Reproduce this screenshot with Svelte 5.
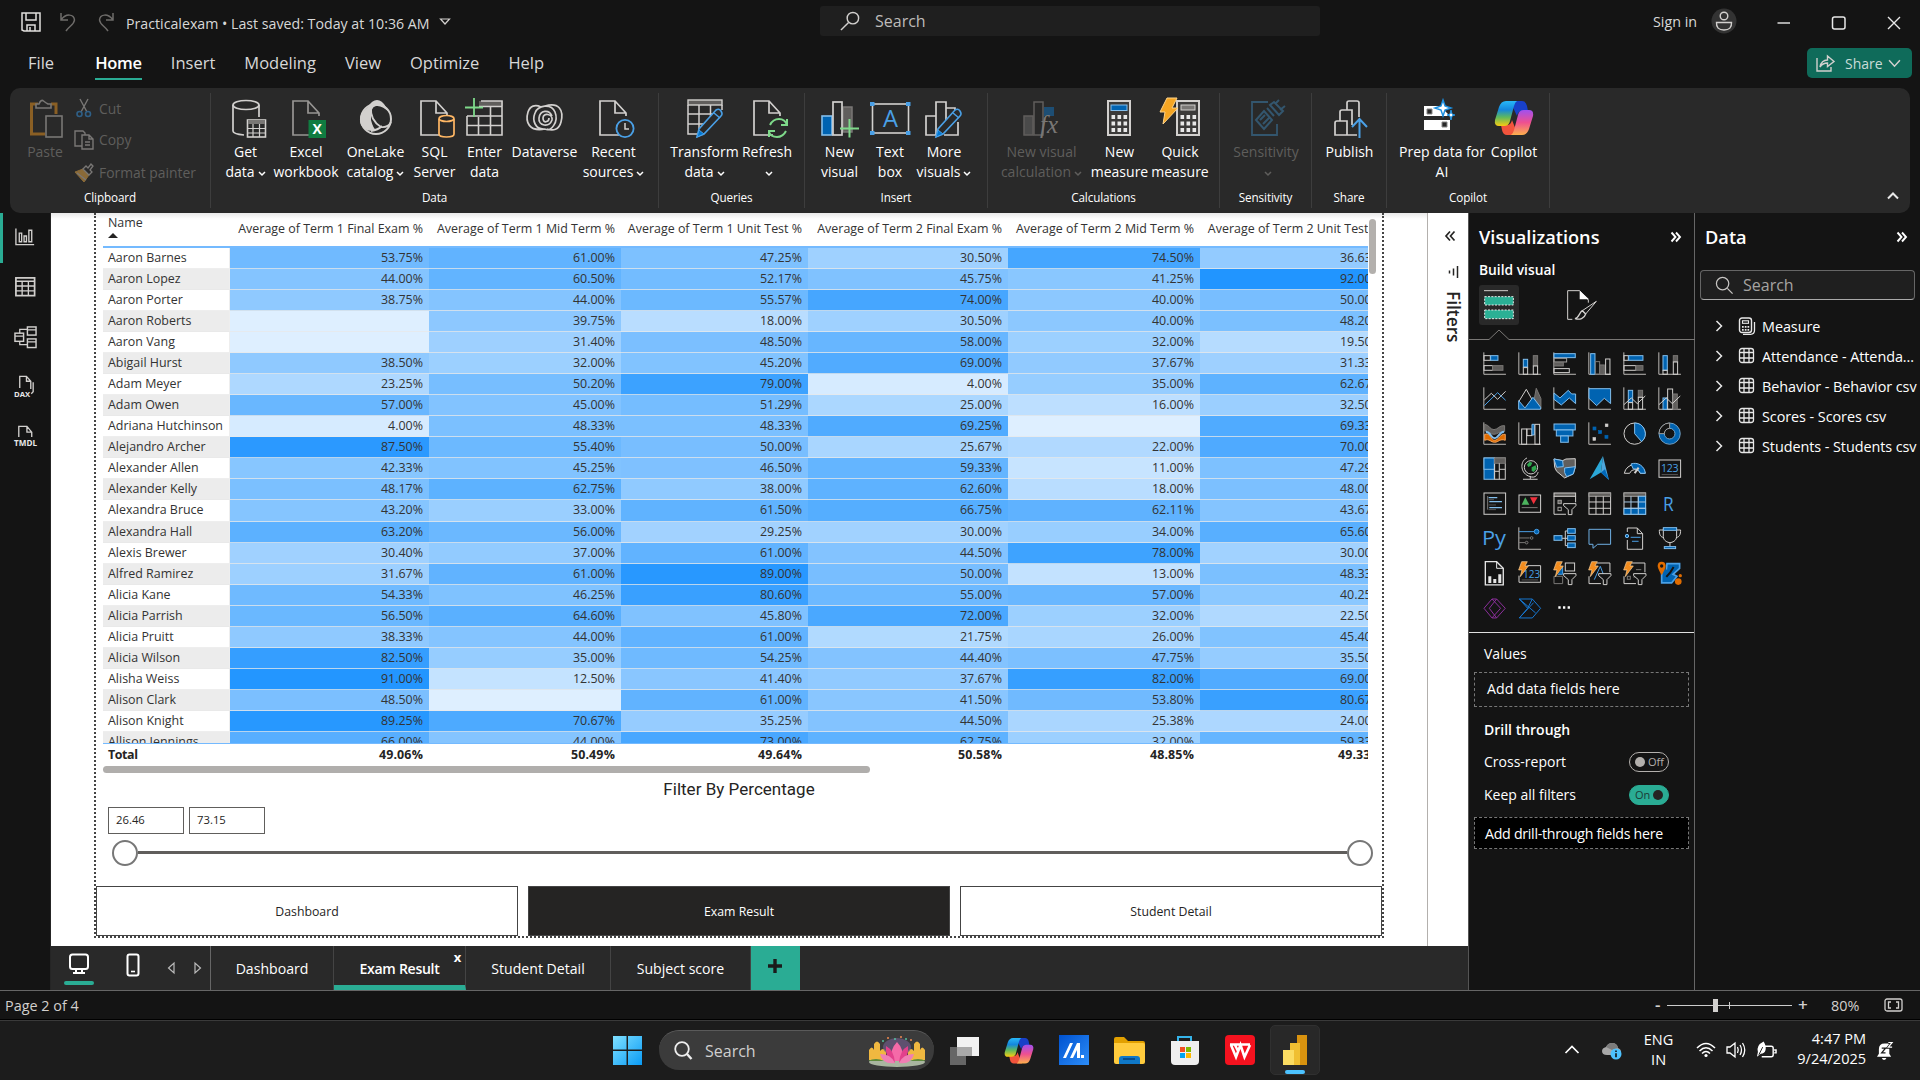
<script>
  // ---------- icon drawings ----------
  const L = '#d2d0ce', G = '#797775', D = '#605e5c', B = '#0063b1', LB = '#83beec', SB = '#4aa0e6';
  const r = (x, y, w, h, fill = 'none', stroke = L, sw = 3) =>
    `<rect x="${x}" y="${y}" width="${w}" height="${h}" fill="${fill}" stroke="${stroke}" stroke-width="${sw}"/>`;
  const p = (d, stroke = L, fill = 'none', sw = 3) =>
    `<path d="${d}" fill="${fill}" stroke="${stroke}" stroke-width="${sw}"/>`;
  const c = (cx, cy, rad, fill = 'none', stroke = L, sw = 3) =>
    `<circle cx="${cx}" cy="${cy}" r="${rad}" fill="${fill}" stroke="${stroke}" stroke-width="${sw}"/>`;
  const axis = p('M1.5 0V66H68', '#bebbb8');
  const bolt = '<path d="M10-2h17l-7 13h10L6 43l5-20H1z" fill="#f28c1e" stroke="#ffd7a0" stroke-width="2"/>';
  const funnel = '<path d="M31 34h37v6L56 52v15H45V52L31 40z" fill="#141414" stroke="#d2d0ce" stroke-width="3"/>';

  const visuals = [
    axis + r(2, 10, 19, 14) + r(22, 10, 22, 14, B, LB) + r(2, 40, 26, 14) + r(28, 40, 31, 14, D, G),
    axis + r(15, 21, 13, 23, B, LB) + r(15, 46, 13, 20) + r(45, 10, 13, 30, D, G) + r(45, 41, 13, 25),
    axis + r(2, 4, 64, 12, B, LB) + r(2, 18, 38, 11, 'none', '#a19f9d') + r(2, 30, 28, 11, D, G) + r(2, 49, 46, 12, 'none'),
    axis + r(7, 4, 13, 62, B, LB) + r(21, 28, 13, 38, 'none', G) + r(34, 38, 14, 28, D, G) + r(52, 20, 13, 46),
    axis + r(2, 10, 13, 14) + r(16, 10, 43, 14, B, LB) + r(2, 40, 36, 14) + r(38, 40, 21, 14, D, G),
    axis + r(14, 10, 13, 44, B, LB) + r(14, 54, 13, 12) + r(45, 10, 13, 18, D, G) + r(45, 29, 13, 37),

    axis + p('M3 55L43 16L67 39', SB) + p('M3 38L24 18L43 36L67 12'),
    p('M48 34L54 3L68 34V64Z', G, D) + p('M2 42L24 6L42 38') + p('M1 40L20 62L44 30L67 60V66H1Z', LB, B),
    axis + p('M2 17L20 32L45 9L55 20H67V49L48 32L24 53L2 36Z', LB, B),
    axis + p('M2 4H67V49L48 33L25 55L2 33Z', LB, B),
    axis + r(15, 9, 13, 36, B, LB) + r(15, 46, 13, 20) + r(45, 9, 13, 20, D, G) + r(45, 30, 13, 36) + p('M2 52L24 32L42 49L66 26'),
    axis + r(14, 32, 13, 34, B, LB) + r(28, 5, 15, 61) + r(44, 20, 13, 46, D, G) + p('M2 52L24 32L42 49L66 26'),

    axis + p('M4 6C18 8 20 22 32 22S48 8 64 10V28C48 26 44 36 32 36S18 26 4 26Z', G, D) + p('M4 36C22 30 22 54 34 54S50 34 66 36V54C50 48 46 60 34 60S18 48 4 54Z', '#f2a25a', '#e06c00') + p('M8 28C24 30 22 48 34 48S48 28 62 28', LB, 'none', 6),
    axis + r(10, 20, 15, 46) + r(26, 20, 15, 20) + p('M41 6H48V38H41Z', LB, B) + r(50, 6, 14, 60),
    r(2, 5, 64, 18, B, LB) + r(9, 23, 50, 18, B, LB) + r(22, 41, 23, 19, B, LB),
    axis + r(14, 14, 9, 9, B, B, 2) + r(31, 25, 9, 9, B, B, 2) + r(50, 39, 9, 9, B, B, 2) + r(51, 5, 8, 8, L, L, 2) + r(14, 46, 8, 8, L, L, 2),
    c(34, 34, 32) + p('M34 2A32 32 0 0 1 55 58L34 34Z', LB, B),
    c(34, 34, 24, 'none', B, 15) + c(34, 34, 32, 'none', LB, 2.5) + c(34, 34, 16, 'none', LB, 2.5) + p('M34 2A32 32 0 0 0 2 34H18A16 16 0 0 1 34 18Z', '#a19f9d', '#141414'),

    r(2, 2, 31, 64, B, LB) + r(2, 2, 31, 34, B, LB) + r(34, 2, 32, 64) + r(34, 2, 32, 16, D, G) + p('M48 18V66M34 42H48M48 36H66'),
    c(38, 30, 20, 'none') + '<path d="M26 22l8-9 8 3-4 9-8 4zM40 30l12-6 3 10-9 10-6-4z" fill="#2fa84f"/>' + p('M26 2C6 10 4 44 30 56S58 46 60 44M36 56V65M14 66H58'),
    p('M2 5L28 10L38 5L66 4V30L60 50L34 62L10 42L4 30Z', L, D) + p('M2 5L28 10L30 28L10 30ZM34 32L66 28L60 50L40 58L34 46Z', LB, B),
    '<path d="M44-4L4 66L38 46Z" fill="#2ba8d8"/><path d="M44-4L62 68L38 46Z" fill="#4ea6dc"/><path d="M38 46L62 68L50 36Z" fill="#0067b8"/>',
    p('M3 48A32 32 0 0 1 66 48H51A17 17 0 0 0 19 48Z', L, '#141414') + p('M23 20A32 32 0 0 1 66 48H51A17 17 0 0 0 30 35Z', LB, B) + p('M34 48L46 31', L, 'none', 6),
    r(2, 8, 65, 52) + `<text x="34" y="45" text-anchor="middle" font-size="32" letter-spacing="-1" font-family="Open Sans, sans-serif" fill="${SB}">123</text>` + p('M10 52H59', G, 'none', 2),

    r(2, 2, 65, 64) + p('M13 11V52', G) + p('M16 16H42M18 28H56M18 46H56', LB, 'none', 4) + p('M16 22H32M16 38H38M16 52H38', G, 'none', 2),
    r(2, 8, 65, 52) + '<path d="M10 37L21 15L33 37Z" fill="#4cb35e"/><path d="M35 15H58L46 36Z" fill="#f0303c"/>' + p('M10 46H58', G),
    r(2, 2, 65, 10, D) + p('M2 12V66H38M67 12V30') + r(14, 24, 10, 10, D, '#a19f9d') + r(14, 45, 10, 10, 'none', '#a19f9d') + funnel,
    r(2, 2, 65, 64) + r(2, 2, 65, 10, D, '#a19f9d') + p('M23 12V66M45 12V66M2 29H67M2 48H67'),
    r(2, 2, 65, 64) + r(2, 2, 65, 10, D, '#a19f9d') + r(45, 12, 22, 54, B, LB) + r(2, 48, 65, 18, B, LB) + p('M23 12V66M45 12V66M2 29H67M2 48H67', '#a8c8e4'),
    `<text x="14" y="56" font-size="58" textLength="32" lengthAdjust="spacingAndGlyphs" font-family="Open Sans, sans-serif" fill="${SB}">R</text>`,

    `<text x="-4" y="52" font-size="60" textLength="72" lengthAdjust="spacingAndGlyphs" font-family="Open Sans, sans-serif" fill="${SB}">Py</text>`,
    axis + p('M2 13H48', SB) + c(55, 13, 7, B, SB) + p('M2 32H34M2 46H20', G) + c(40, 32, 4, 'none', G) + c(25, 46, 4, 'none', G),
    p('M26 33H36M36 11V55M36 11H44M36 33H44M36 55H44') + r(2, 25, 24, 14, B, LB) + r(43, 4, 23, 14, B, LB) + r(43, 25, 23, 14, B, LB) + r(43, 47, 23, 14, B, LB),
    p('M2 6H67V51H28L14 63V51H2Z', '#6fb0e4'),
    p('M12 14V2H42L58 19V66H12V38M42 2V19H58') + c(11, 26, 5, B, LB) + p('M22 30H52', SB) + p('M26 42H46', SB),
    p('M15 4H55V28C55 40 42 46 35 46S15 40 15 28Z') + p('M15 8H3C3 22 6 29 17 31M55 8H67C67 22 64 29 53 31M35 46V58') + r(15, 1, 40, 8, B, LB) + r(18, 58, 34, 6, B, LB),

    p('M6-2H40L60 18V68H6Z', '#e6e6e6', 'none', 4) + p('M40-2V18H60', '#e6e6e6') + '<path d="M15 42h9v20h-9zM30 50h9v12h-9zM45 36h9v26h-9z" fill="#e6e6e6"/>',
    p('M28 10H67V60H2V40') + `<text x="40" y="47" text-anchor="middle" font-size="30" font-family="Open Sans, sans-serif" fill="${SB}">123</text>` + p('M10 53H59', G, 'none', 2) + bolt,
    r(36, 2, 28, 24, 'none', L) + p('M2 42H28V64H2Z', G) + p('M28 14V36H14', SB, B) + bolt + funnel,
    p('M26 2H65V30M2 42V64H38') + p('M18 52L36 12L46 38', SB) + bolt + funnel,
    p('M26 2H65V30M2 42V64H38') + p('M38 22H54M30 44H36', G) + r(12, 42, 9, 9, 'none', G) + bolt + funnel,
    p('M10 18V62H40L56 42L44 36L64 18V4H26L24 22', '#4aa0e6', '#0063b1', 5) + p('M24 44L36 30L46 14', '#141414', 'none', 6) + '<path d="M10-2c8 0 12 5 12 12 0 9-12 28-12 28S-2 19-2 10C-2 3 2-2 10-2z" fill="#e06c00"/><circle cx="10" cy="11" r="5" fill="#141414"/><circle cx="60" cy="58" r="10" fill="#e06c00"/><circle cx="66" cy="40" r="5" fill="#e06c00"/>',

    p('M2 33L26 5H40L66 33L40 62H26ZM26 5L52 33L26 62M40 5L18 33L40 62', '#8b2f9b', 'none', 3),
    p('M3 5H42L67 33L42 62H3L28 33ZM3 5L52 47M3 62L46 16M42 5L28 33', '#1777d1', 'none', 3),
    '<path d="M15 27h7v7h-7zM29 27h7v7h-7zM43 27h7v7h-7z" fill="#fff"/>',
  ];

  const page = (x) => p(`M${x + 26} 18V15L${x + 15} 3H${x}V37H${x + 19}M${x + 15} 3V15H${x + 26}`, L, 'none', 1.7);
  const bars = p('M2 37V18H12V37ZM12 37V4H21V37ZM21 10H31V20', L, 'none', 1.6);
  const pencil = '<path d="M12 39l2-8L31 12q3-2 5 1t0 5L19 36z" fill="#292929" stroke="#4aa0e6" stroke-width="1.6"/><path d="M12 39l2-7 5 4z" fill="#0078d4" stroke="#4aa0e6"/><path d="M29 15l6 5" stroke="#4aa0e6" stroke-width="1.5"/>';
  const calc = (x) => r(x, 3, 22, 34, '#3b3a39', L, 2) + Array.from({ length: 9 }, (_, i) => `<rect x="${x + 3.5 + (i % 3) * 6}" y="${17 + Math.floor(i / 3) * 6.5}" width="3.6" height="4" fill="#e8e8e8"/>`).join('');
  const copilot = `<defs><linearGradient id="ca" x1="0" y1="0" x2="0" y2="1"><stop offset="0" stop-color="#28b8f8"/><stop offset=".35" stop-color="#1487dd"/><stop offset=".65" stop-color="#5fb95c"/><stop offset="1" stop-color="#f8cc12"/></linearGradient><linearGradient id="cb" x1="0" y1="0" x2="0" y2="1"><stop offset="0" stop-color="#a050f0"/><stop offset=".5" stop-color="#ee5090"/><stop offset="1" stop-color="#fdb04c"/></linearGradient></defs>
    <path d="M16 3h12q4 0 5 5l1 5h-6q-4 0-5 5z" fill="#1840c8"/><path d="M24 37H13q-4 0-5-5l-1-5h6q4 0 5-5z" fill="#f2543c"/>
    <path d="M12 3h11q-2 1-3 5l-4 15q-1 5-6 5H5q-5 0-4-6l4-13q2-6 7-6z" fill="url(#ca)"/><path d="M28 37H17q2-1 3-5l4-15q1-5 6-5h5q5 0 4 6l-4 13q-2 6-7 6z" fill="url(#cb)"/>`;

  const ribbonIcons = {
    getData: p('M7 7V33Q7 36 18 37M33 7V19', L, 'none', 1.7) + `<ellipse cx="20" cy="7" rx="13" ry="4.5" fill="none" stroke="${L}" stroke-width="1.7"/>` + r(21.5, 22, 18, 17, '#292929', L, 1.6) + `<path d="M22 22h17v4H22z" fill="${G}"/>` + p('M27 26V39M33.5 26V39M22 30.5H39M22 35H39', L, 'none', 1.2),
    excel: page(7).replaceAll(L, '#979593') + '<rect x="22.500" y="22" width="17.500" height="18" fill="#107c41"/><text x="31.200" y="36" text-anchor="middle" font-size="14" font-weight="700" font-family="Open Sans, sans-serif" fill="#fff">X</text>',
    onelake: c(20, 21, 15, 'none', L, 2) + '<path d="M12 9Q16 2 21 2T30 9L34 15Q26 7 20 8T15 22Q17 30 20 32Q10 35 5 27Q1 17 12 9Z" fill="#d2d0ce"/>' + p('M15 10Q14 22 25 29Q32 30 35 24M15 33Q22 32 26 28', L, 'none', 1.8),
    sql: page(6) + p('M24 21V36Q24 39 31.500 39T39 36V21', '#ffb764', '#292929', 1.7) + '<ellipse cx="31.500" cy="20.500" rx="7.500" ry="3" fill="#292929" stroke="#ffb764" stroke-width="1.700"/>',
    enter: `<path d="M14 3h24v5H14z" fill="${D}"/>` + p('M16 3H37V37H2V18M14 8.500H37M2 18H37M2 27.500H37M13.500 19V37M25.500 9V37', L, 'none', 1.6) + p('M0 9.500H18M9 0V19', '#7ed98a', 'none', 1.8),
    dataverse: p('M20 31C4 34 0 24 3 14C5 8 10 6 16 9M20 8C34 4 39 12 36 24C34 32 28 33 22 31M20 31C10 32 7 22 10 15C13 7 26 5 30 14C34 24 26 34 20 31M27 18C24 11 15 12 14 20S24 30 27 22C28 16 18 14 18 20S24 24 24 20', L, 'none', 1.7),
    recent: page(6) + c(31, 30.5, 8.6, '#292929', SB, 1.8) + p('M31 25V31H35', L, 'none', 1.5),
    transform: r(3, 2, 34, 5, D, L, 1.4) + p('M3 7V36H14M37 7V12M3 16H29M3 26H20M14 7V36M25.500 7V20', L, 'none', 1.5) + pencil,
    refresh: page(7) + '<path d="M23 27q3-6 9-6 6 0 8 6M39 33q-3 6-9 6-6 0-8-5M40 21v6h-6M22 39v-6h6" fill="none" stroke="#7ed98a" stroke-width="2"/>',
    newVisual: r(2, 18, 10, 19, B, LB, 1.6) + r(23, 9, 9, 25, D, G, 1.5) + r(13, 4, 9, 33, '#292929', L, 1.7) + p('M20 30.500H39M29.500 21V39.500', '#7ed98a', 'none', 2),
    textBox: r(2.5, 6, 36, 29, 'none', L, 1.6) + `<text x="20.500" y="29" text-anchor="middle" font-size="24" textLength="15" lengthAdjust="spacingAndGlyphs" font-family="Open Sans, sans-serif" fill="${SB}">A</text>` + [[0, 4], [36, 4], [0, 33], [36, 33]].map(([x, y]) => `<rect x="${x}" y="${y}" width="4.500" height="4" fill="${SB}"/>`).join(''),
    moreVisuals: p('M2 37V18H12V37ZM12 37V4H22V26M22 10H31V14M34 24V37H20', L, 'none', 1.7) + pencil,
    newCalc: r(2, 18, 9, 19, '#4a4a4a', D, 1.5) + r(12, 4, 9, 33, 'none', D, 1.5) + '<path d="M22 9h10v9H22z" fill="#1d4e74"/><text x="18" y="35" font-size="25" font-style="italic" font-family="Liberation Serif, serif" fill="#797775">fx</text>',
    newMeasure: calc(8) + r(11, 7, 16, 5.5, B, LB, 1),
    quickMeasure: calc(17) + r(21, 7, 14, 5, G, L, 1) + '<path d="M7 0h10l-5 10h6L3 26l2-12H0z" fill="#f5a623" stroke="#ffd48a" stroke-width="1"/>',
    sensitivity: p('M22 4H6V37H31V26', '#33566e', 'none', 1.8) + '<path d="M10 22l8-9 8 9-8 9zM21 10l7 8M24 7l9 10 4-4-9-9zM14 22l5-5M17 26l6-6M29 6l4-4M34 12l5-4" fill="none" stroke="#33566e" stroke-width="2"/>',
    publish: '<path d="M5 37V25q0-2 2-2h10v14zM10 23V14q0-2 2-2h10v15M17 12V5q0-2 2-2h8q2 0 2 2v14M5 37h22" fill="none" stroke="#d2d0ce" stroke-width="1.700"/>' + p('M29.500 40V21M22 29L29.500 21L37 29', SB, 'none', 2),
    prep: '<path d="M2 8h16l4 4 5 5v1H2zM2 22h26v10H2z" fill="#fff"/><path d="M5 11h5v5H5zM20 24h5v5h-5z" fill="#292929" stroke="#888"/><path d="M21 2l2 6 6 2-6 2-2 6-2-6-6-2 6-2z" fill="#fff" stroke="#1b8fe0" stroke-width="1.500"/><path d="M29 12l1 4 3 1-3 1-1 4-1-4-3-1 3-1z" fill="#fff" stroke="#1b8fe0"/>',
    copilot,
  };

  const groups = [
    { label: 'Data', w: 448, pad: 9, items: [
      { i: 'getData', t: ['Get', 'data'], w: 51, v: 1 }, { i: 'excel', t: ['Excel', 'workbook'], w: 70 }, { i: 'onelake', t: ['OneLake', 'catalog'], w: 69, v: 1 },
      { i: 'sql', t: ['SQL', 'Server'], w: 49 }, { i: 'enter', t: ['Enter', 'data'], w: 51 }, { i: 'dataverse', t: ['Dataverse', ''], w: 69 }, { i: 'recent', t: ['Recent', 'sources'], w: 69, v: 1 }] },
    { label: 'Queries', w: 146, pad: 12, items: [{ i: 'transform', t: ['Transform', 'data'], w: 67, v: 1 }, { i: 'refresh', t: ['Refresh', ''], w: 58, v: 1 }] },
    { label: 'Insert', w: 183, pad: 10, items: [{ i: 'newVisual', t: ['New', 'visual'], w: 49 }, { i: 'textBox', t: ['Text', 'box'], w: 52 }, { i: 'moreVisuals', t: ['More', 'visuals'], w: 56, v: 1 }] },
    { label: 'Calculations', w: 232, pad: 6, items: [{ i: 'newCalc', t: ['New visual', 'calculation'], w: 95, v: 1, off: 1 }, { i: 'newMeasure', t: ['New', 'measure'], w: 61 }, { i: 'quickMeasure', t: ['Quick', 'measure'], w: 60 }] },
    { label: 'Sensitivity', w: 92, pad: 0, items: [{ i: 'sensitivity', t: ['Sensitivity', ''], w: 92, v: 1, off: 1 }] },
    { label: 'Share', w: 75, pad: 0, items: [{ i: 'publish', t: ['Publish', ''], w: 75 }] },
    { label: 'Copilot', w: 163, pad: 11, items: [{ i: 'prep', t: ['Prep data for', 'AI'], w: 88 }, { i: 'copilot', t: ['Copilot', ''], w: 56 }] },
  ];

  // ---------- report data ----------
  const columns = ['Term 1 Final Exam', 'Term 1 Mid Term', 'Term 1 Unit Test', 'Term 2 Final Exam', 'Term 2 Mid Term', 'Term 2 Unit Test'];
  const students = [
    ['Aaron Barnes', 53.75, 61, 47.25, 30.5, 74.5, 36.63], ['Aaron Lopez', 44, 60.5, 52.17, 45.75, 41.25, 92],
    ['Aaron Porter', 38.75, 44, 55.57, 74, 40, 50], ['Aaron Roberts', null, 39.75, 18, 30.5, 40, 48.2],
    ['Aaron Vang', null, 31.4, 48.5, 58, 32, 19.5], ['Abigail Hurst', 38.5, 32, 45.2, 69, 37.67, 31.33],
    ['Adam Meyer', 23.25, 50.2, 79, 4, 35, 62.67], ['Adam Owen', 57, 45, 51.29, 25, 16, 32.5],
    ['Adriana Hutchinson', 4, 48.33, 48.33, 69.25, null, 69.33], ['Alejandro Archer', 87.5, 55.4, 50, 25.67, 22, 70],
    ['Alexander Allen', 42.33, 45.25, 46.5, 59.33, 11, 47.29], ['Alexander Kelly', 48.17, 62.75, 38, 62.6, 18, 48],
    ['Alexandra Bruce', 43.2, 33, 61.5, 66.75, 62.11, 43.67], ['Alexandra Hall', 63.2, 56, 29.25, 30, 34, 65.6],
    ['Alexis Brewer', 30.4, 37, 61, 44.5, 78, 30], ['Alfred Ramirez', 31.67, 61, 89, 50, 13, 48.33],
    ['Alicia Kane', 54.33, 46.25, 80.6, 55, 57, 40.25], ['Alicia Parrish', 56.5, 64.6, 45.8, 72, 32, 22.5],
    ['Alicia Pruitt', 38.33, 44, 61, 21.75, 26, 45.4], ['Alicia Wilson', 82.5, 35, 54.25, 44.4, 47.75, 35.5],
    ['Alisha Weiss', 91, 12.5, 41.4, 37.67, 82, 69], ['Alison Clark', 48.5, null, 61, 41.5, 53.8, 80.67],
    ['Alison Knight', 89.25, 70.67, 35.25, 44.5, 25.38, 24], ['Allison Jennings', 66, 44, 73, 62.75, 32, 59.33],
  ];
  const totals = [49.06, 50.49, 49.64, 50.58, 48.85, 49.33];
  const pct = (v) => (v == null ? '' : v.toFixed(2) + '%');
  // Background scale runs from pale blue (0) to the theme blue (100).
  const shade = (v) => {
    const k = (v ?? 0) / 100;
    return `rgb(${Math.round(222 - 205 * k)},${Math.round(239 - 98 * k)},255)`;
  };

  const pages = [{ n: 'Dashboard', w: 123 }, { n: 'Exam Result', w: 132 }, { n: 'Student Detail', w: 145 }, { n: 'Subject score', w: 140 }];
  const menu = ['File', 'Home', 'Insert', 'Modeling', 'View', 'Optimize', 'Help'];
  const fields = ['Measure', 'Attendance - Attenda...', 'Behavior - Behavior csv', 'Scores - Scores csv', 'Students - Students csv'];
  const navs = ['Dashboard', 'Exam Result', 'Student Detail'];

  const rail = [
    p('M2 3V20H21M5.500 8V17H8V8ZM10.500 11V17H13V11ZM15.500 5V17H18.500V5Z', L, 'none', 1.4),
    r(2, 2.5, 19.5, 18.5, 'none', L, 1.8) + p('M2 6H21.500M2 11H21.500M2 16H21.500M8.500 6V21M15 6V21', L, 'none', 1.4),
    r(1, 8, 9, 8.5, 'none', L, 1.5) + r(14, 1.5, 9, 8.5, 'none', L, 1.5) + r(14, 14, 9, 9, 'none', L, 1.5) + p('M1 11H10M14 4.500H23M14 17H23M6 8V4H14M6 16.500V20H14', L, 'none', 1.3),
    p('M6 14V2H13L17.500 7V15M13 2V7H17.500M20 8V18L18 20', L, 'none', 1.4) + '<text x="0" y="23" font-size="8" font-weight="700" font-family="Open Sans, sans-serif" fill="#e8e8e8">DAX</text>',
    p('M5 13V2H13.500L18.500 8V13M13.500 2V8H18.500', L, 'none', 1.4) + '<text x="0" y="22.500" font-size="8.500" textLength="24" font-weight="700" font-family="Open Sans, sans-serif" fill="#e8e8e8">TMDL</text>',
  ];

  const grad = (id, a, b) => `<linearGradient id="${id}" x1="0" y1="0" x2="1" y2="1"><stop offset="0" stop-color="${a}"/><stop offset="1" stop-color="${b}"/></linearGradient>`;
  const apps = [
    { w: 30, html: '<path d="M1 12h16v18H1z" fill="#666"/><path d="M8 2h22v19H8z" fill="#f2f2f2"/><path d="M8 12h15v9H8z" fill="#a9a9a9"/>' },
    { w: 30, html: `<g transform="scale(.75) translate(0 1)">${copilot}</g>` },
    { w: 30, html: `<defs>${grad('ma', '#0052d0', '#2c8df8')}</defs><path d="M0 0h30v30H0z" fill="url(#ma)"/><path d="M4 23l7-15h3L7 23zM11 23l7-15h3v15h-3v-8l-4 8zM22 20h3v3h-3z" fill="#fff"/>` },
    { w: 31, html: '<path d="M0 4q0-2 2-2h8l4 4h15q2 0 2 2v6H0z" fill="#e2a000"/><path d="M0 8h29q2 0 2 2v17q0 2-2 2H2q-2 0-2-2z" fill="#ffcb3d"/><path d="M5 29v-5q0-3 3-3h15q3 0 3 3v5z" fill="#0f78c8"/><path d="M9 24h12" stroke="#063e78" stroke-width="1.500"/>' },
    { w: 30, html: '<path d="M8 7V2h13v5" fill="none" stroke="#35b4ea" stroke-width="2"/><path d="M1 6h28v20q0 4-4 4H5q-4 0-4-4z" fill="#efefef"/><path d="M10 12h5v5h-5z" fill="#f25022"/><path d="M16 12h5v5h-5z" fill="#7fba00"/><path d="M10 18h5v5h-5z" fill="#00a4ef"/><path d="M16 18h5v5h-5z" fill="#ffb900"/>' },
    { w: 30, html: '<rect width="30" height="30" rx="4" fill="#f5121f"/><path d="M5 9.500h20M6 10l5 12 4.500-12 4 12L25 10M10 10l3 6" fill="none" stroke="#fff" stroke-width="2.600"/>' },
  ];
</script>

<div class="app">
  <header class="title">
    <svg class="i20" viewBox="0 0 20 20">{@html p('M1 2V18L3 19H19V1H1ZM5 1V8H15V1M6 19V13H14V19M9 19V15', '#e1dfdd', 'none', 1.5)}</svg>
    <svg class="i20 undo" viewBox="0 0 20 20">{@html p('M3 1V8H10M3 8C8 1 16 2 16.500 8C16 13 11 14 8 19', '#6e6c6a', 'none', 1.5)}</svg>
    <svg class="i20 redo" viewBox="0 0 20 20">{@html p('M17 1V8H10M17 8C12 1 4 2 3.500 8C4 13 9 14 12 19', '#6e6c6a', 'none', 1.5)}</svg>
    <span class="doc">Practicalexam • Last saved: Today at 10:36 AM</span>
    <svg class="tri" viewBox="0 0 12 8"><path d="M1.500 1h9L6 6z" fill="none" stroke="#d2d0ce" stroke-width="1.200" /></svg>
    <div class="topsearch">
      <svg class="i22" viewBox="0 0 22 22">{@html c(13.5, 7.5, 6, 'none', L, 1.5) + p('M9 12L1 20', L, 'none', 1.5)}</svg><span>Search</span>
    </div>
    <span class="signin">Sign in</span>
    <svg class="avatar" viewBox="0 0 26 26"><circle cx="13" cy="13" r="12.500" fill="#333" />{@html c(13, 8, 3.8, 'none', L, 1.4) + p('M5.500 14.500H20.500Q21 22 13 22T5.500 14.500Z', L, 'none', 1.4)}</svg>
    <div class="win">
      <svg viewBox="0 0 16 16">{@html p('M1.500 8H14', '#e8e8e8', 'none', 1.4)}</svg>
      <svg viewBox="0 0 16 16"><rect x="1.500" y="2" width="12.500" height="12" rx="2" fill="none" stroke="#e8e8e8" stroke-width="1.500" /></svg>
      <svg viewBox="0 0 16 16">{@html p('M2 2L14 14M14 2L2 14', '#e8e8e8', 'none', 1.4)}</svg>
    </div>
  </header>

  <nav class="menu">
    {#each menu as m}<span class:active={m === 'Home'}>{m}</span>{/each}
    <button class="share">
      <svg viewBox="0 0 20 20">{@html p('M2 5V18H16V14M5 14C6 9 9 7 12.500 7V3L19 8.500L12.500 13.500V10C9 10 7 11 5 14Z', L, 'none', 1.4)}</svg>Share
      <svg class="chev" viewBox="0 0 12 12">{@html p('M1 3L6 8.500L11 3', L, 'none', 1.4)}</svg>
    </button>
  </nav>

  <section class="ribbon">
    <div class="group clip">
      <div class="clipbody">
        <div class="paste">
          <svg viewBox="0 0 40 40">
            {@html p('M11 6H4.500V36H18M24 6H29V16', '#8a5f24', 'none', 3) + p('M9 10V6H12Q14 1 16.500 3T21 6H24V10Z', '#797775', '#292929', 1.6) + r(19, 18, 16, 21, '#292929', '#797775', 1.6)}
          </svg>
          <span>Paste</span>
        </div>
        <div class="clips">
          <div><svg viewBox="0 0 20 20">{@html p('M6 1L13 14M14 1L7 14', '#797775', 'none', 1.4) + c(5.5, 16, 2.5, 'none', '#2f5f86', 1.6) + c(14, 16, 2.5, 'none', '#2f5f86', 1.6)}</svg>Cut</div>
          <div><svg viewBox="0 0 20 20">{@html p('M8 16H1V1H9L11 3V5M8 5H15L19 9V19H8ZM15 5V9H19M11 12H16M11 15H16', '#797775', 'none', 1.4)}</svg>Copy</div>
          <div><svg viewBox="0 0 20 20">{@html p('M1 9L9 6L15 12L10 19Z', '#8a6a38', '#8a6a38', 1) + p('M9 6L12 3L14 5L17 1L19 3L16 7L18 9L15 12ZM3 10L12 17', '#797775', '#292929', 1.3)}</svg>Format painter</div>
        </div>
      </div>
      <p>Clipboard</p>
    </div>
    {#each groups as g}
      <div class="group" style="width:{g.w}px">
        <div class="items" style="padding-left:{g.pad}px">
          {#each g.items as it}
            <div class="item" class:off={it.off} style="width:{it.w}px">
              <svg class="ri" viewBox="0 0 40 40">{@html ribbonIcons[it.i]}</svg>
              <span>{it.t[0]}</span>
              <span>{it.t[1]}{#if it.v}<svg class="car" viewBox="0 0 8 6"><path d="M1 1l3 3 3-3" fill="none" stroke="currentColor" stroke-width="1.500" /></svg>{/if}</span>
            </div>
          {/each}
        </div>
        <p>{g.label}</p>
      </div>
    {/each}
    <svg class="collapse" viewBox="0 0 12 8">{@html p('M1 6.500L6 1.500L11 6.500', '#e8e8e8', 'none', 2)}</svg>
  </section>

  <main>
    <aside class="rail">
      {#each rail as icon, n}<div class:on={n === 0}><svg viewBox="0 0 24 24">{@html icon}</svg></div>{/each}
    </aside>

    <div class="center">
      <div class="work">
        <div class="canvas">
          <div class="frame">
            <div class="matrix">
              <div class="row head">
                <span>Name<i></i></span>
                {#each columns as col}<span>Average of {col} %</span>{/each}
              </div>
              <div class="rows">
                {#each students as s}
                  <div class="row">
                    <span>{s[0]}</span>
                    {#each s.slice(1) as v}<span style="background:{shade(v)}">{pct(v)}</span>{/each}
                  </div>
                {/each}
              </div>
              <div class="row total"><span>Total</span>{#each totals as t}<span>{pct(t)}</span>{/each}</div>
            </div>
            <div class="vbar"></div>
            <div class="hbar"></div>
            <h3>Filter By Percentage</h3>
            <div class="inputs"><span>26.46</span><span>73.15</span></div>
            <div class="slider"><b></b><hr /><b></b></div>
            <div class="navs">{#each navs as n}<span class:sel={n === 'Exam Result'}>{n}</span>{/each}</div>
          </div>
        </div>
        <div class="filters">
          <svg class="dbl" viewBox="0 0 12 12">{@html p('M6 1.500L2 6L6 10.500M10.500 1.500L6.500 6L10.500 10.500', '#252423', 'none', 1.7)}</svg>
          <svg class="fi" viewBox="0 0 12 12">{@html p('M10.500 0V12M6.500 2.500V9.500M2.500 4.500V7.500', '#252423', 'none', 1.5)}</svg>
          <span>Filters</span>
        </div>
      </div>
      <div class="pages">
        <div class="views">
          <div class="desk"><svg viewBox="0 0 22 22">{@html '<rect x="2" y="1.500" width="18" height="14.500" rx="2.500" fill="none" stroke="#fff" stroke-width="2"/>' + p('M8 16V19M14 16V19M5 20H17', '#fff', 'none', 2)}</svg><i></i></div>
          <svg class="phone" viewBox="0 0 14 24"><rect x="1.500" y="1.500" width="11" height="21" rx="2" fill="none" stroke="#fff" stroke-width="2" />{@html p('M5 18.500H9', '#fff', 'none', 1.6)}</svg>
          <svg class="arr" viewBox="0 0 8 12">{@html p('M7 1V11L1.500 6Z', '#bbb', 'none', 1.2)}</svg>
          <svg class="arr a2" viewBox="0 0 8 12">{@html p('M1 1V11L6.500 6Z', '#bbb', 'none', 1.2)}</svg>
        </div>
        {#each pages as pg, n}
          <div class="tab" class:cur={n === 1} style="width:{pg.w}px">{pg.n}{#if n === 1}<em>x</em>{/if}</div>
        {/each}
        <div class="add"><svg viewBox="0 0 14 14">{@html p('M7 0V14M0 7H14', '#1b1b1b', 'none', 3.4)}</svg></div>
      </div>
    </div>

    <section class="viz">
      <h2>Visualizations<svg class="dbl" viewBox="0 0 12 12">{@html p('M1.500 1.500L5.500 6L1.500 10.500M6 1.500L10 6L6 10.500', '#fff', 'none', 1.9)}</svg></h2>
      <h4>Build visual</h4>
      <div class="modes">
        <div class="mode"><svg viewBox="0 0 90 90">{@html p('M0 2H72', L) + r(2, 20, 86, 25, '#2bb095', '#e8e8e8').replace('/>', ' stroke-dasharray="6 4"/>') + r(2, 60, 86, 26, '#2bb095', '#e8e8e8').replace('/>', ' stroke-dasharray="6 4"/>')}</svg></div>
        <svg class="brush" viewBox="0 0 90 90">{@html p('M16 88H2V2H38L64 30V38', L) + '<path d="M38 2V28H66Z" fill="#fff"/>' + p('M88 34L56 72L46 62Z', L, '#141414') + p('M24 86C36 84 36 68 46 62L56 72C52 86 38 90 24 86Z', L, '#141414', 4)}</svg>
      </div>
      <svg class="notch" viewBox="0 0 226 12">{@html p('M0 10.500H20L30 1L40 10.500H226', '#797775', 'none', 1)}</svg>
      <div class="gallery">{#each visuals as v}<div><svg viewBox="-4 -4 80 80">{@html v}</svg></div>{/each}</div>
      <div class="wells">
        <p>Values</p>
        <div class="well">Add data fields here</div>
        <p class="b">Drill through</p>
        <p class="sw">Cross-report<span class="toggle"><i></i>Off</span></p>
        <p class="sw two">Keep all filters<span class="toggle ont">On<i></i></span></p>
        <div class="well dark">Add drill-through fields here</div>
      </div>
    </section>

    <section class="data">
      <h2>Data<svg class="dbl" viewBox="0 0 12 12">{@html p('M1.500 1.500L5.500 6L1.500 10.500M6 1.500L10 6L6 10.500', '#fff', 'none', 1.9)}</svg></h2>
      <div class="dsearch"><svg viewBox="0 0 20 20">{@html c(8, 8, 6.5, 'none', '#c8c6c4', 1.3) + p('M13 13L18.500 18.500', '#c8c6c4', 'none', 1.3)}</svg>Search</div>
      {#each fields as f, n}
        <div class="field">
          <svg class="fc" viewBox="0 0 8 12">{@html p('M1.500 1L6.500 6L1.500 11', '#e8e8e8', 'none', 1.5)}</svg>
          <svg class="ft" viewBox="0 0 18 18">
            {#if n === 0}
              {@html '<rect x="1.500" y="1" width="12" height="14.500" rx="2.500" fill="none" stroke="#e8e8e8" stroke-width="1.400"/><path d="M5 17.300h7.500q4 0 4-4V5" fill="none" stroke="#e8e8e8" stroke-width="1.300"/>' + r(4.5, 3.8, 6, 2.5, 'none', '#e8e8e8', 1.1) + '<path d="M4 9h1.700v1.700H4zM6.800 9h1.700v1.700H6.800zM9.500 9h1.700v1.700H9.500zM4 12h1.700v1.700H4zM6.800 12h1.700v1.700H6.800zM9.500 12h1.700v1.700H9.500z" fill="#e8e8e8"/>'}
            {:else}
              {@html '<rect x="1.500" y="1.500" width="14" height="14" rx="2.500" fill="none" stroke="#e8e8e8" stroke-width="1.300"/>' + p('M6 1.500V15.500M11 1.500V15.500M1.500 5.500H15.500M1.500 11H15.500', '#e8e8e8', 'none', 1.3)}
            {/if}
          </svg>
          {f}
        </div>
      {/each}
    </section>
  </main>

  <footer class="status">
    <span>Page 2 of 4</span>
    <div class="zoom">
      <b>-</b><div class="track"><i></i><u></u></div><b class="plus">+</b><span>80%</span>
      <svg viewBox="0 0 20 14"><rect x="1" y="1" width="17" height="12" rx="2" fill="none" stroke="#d2d0ce" stroke-width="1.300" />{@html p('M7 4H4.500V10H7M12 4H14.500V10H12', L, 'none', 1.3)}</svg>
    </div>
  </footer>

  <footer class="taskbar">
    <svg class="start" viewBox="0 0 30 30"><defs>{@html grad('wg', '#7fe0ff', '#0a9bf5')}</defs><path d="M0 0h14v14H0zM15.500 0H30v14H15.500zM0 15.500h14V30H0zM15.500 15.500H30V30H15.500z" fill="url(#wg)" /></svg>
    <div class="pill">
      <svg class="mag" viewBox="0 0 20 20">{@html c(9, 8, 6.8, 'none', '#eee', 1.8) + p('M14 13L18.500 18', '#eee', 'none', 2.4)}</svg>
      <span>Search</span>
      <svg class="lotus" viewBox="0 0 58 32">
        <ellipse cx="29" cy="27" rx="28" ry="5" fill="#a9b5a0" />
        <path d="M1 25V15q3-5 5 0V9q3-5 6 0v7q3-4 6 0v9zM57 25V15q-3-5-5 0V9q-3-5-6 0v7q-3-4-6 0v9z" fill="#f0b840" />
        <path d="M0 26q8-4 16 0h-16zM58 26q-8-4-16 0z" fill="#5d8a3c" />
        <ellipse cx="29" cy="12" rx="14" ry="9" fill="#6d5a86" opacity=".7" />
        <path d="M29 7q8 8 5 19h-10q-3-11 5-19z" fill="#f56aa8" />
        <path d="M18 11q8 4 9 17-10-3-9-17zM40 11q-8 4-9 17 10-3 9-17z" fill="#e2408c" />
        <path d="M12 19q11 0 15 9-12 2-15-9zM46 19q-11 0-15 9 12 2 15-9z" fill="#f07fb4" />
        <g fill="#f08a50"><circle cx="20" cy="3" r="1" /><circle cx="33" cy="2" r="1" /><circle cx="43" cy="5" r="1" /></g>
        <g fill="#55c0a0"><circle cx="15" cy="6" r="1" /><circle cx="27" cy="4" r="1" /><circle cx="38" cy="4" r="1" /></g>
      </svg>
    </div>
    <div class="apps">
      {#each apps as a}<svg style="width:{a.w}px" viewBox="0 0 {a.w} 30">{@html a.html}</svg>{/each}
    </div>
    <div class="pbi">
      <svg viewBox="0 0 24 30"><path d="M14 0h10v30H12V8h2z" fill="#d9930f" /><path d="M7 8h10v22H7z" fill="#f0bf32" /><path d="M0 15h11v15H0z" fill="#fbdc62" /></svg><i></i>
    </div>
    <div class="tray">
      <svg class="up" viewBox="0 0 16 10">{@html p('M1.500 8L8 1.500L14.500 8', '#fff', 'none', 1.7)}</svg>
      <svg class="cloud" viewBox="0 0 22 18"><path d="M6 13q-5 0-5-4 0-3 4-4 2-4 6-4 5 0 6 5 3 1 3 4 0 3-4 3z" fill="#a8a8a8" /><path d="M5 5q2-4 6-4 5 0 6 5l-6 2z" fill="#7c7c7c" /><circle cx="15" cy="12" r="5.500" fill="#4cc2ff" /><path d="M15 8.500v1.500M15 11.200v4" stroke="#111" stroke-width="1.600" /></svg>
      <div class="lang">ENG<br />IN</div>
      <svg class="wifi" viewBox="0 0 20 16">{@html p('M1 6Q10-3 19 6M3.500 9Q10 2.500 16.500 9M6 11.500Q10 7.500 14 11.500', '#fff', 'none', 1.5) + c(10, 13.5, 1.6, '#fff', 'none', 0)}</svg>
      <svg class="vol" viewBox="0 0 20 18">{@html p('M1 6H4L9 2V16L4 12H1ZM11.500 6Q13 9 11.500 12M14 4Q17 9 14 14M16.500 2Q21 9 16.500 16', '#fff', 'none', 1.3)}</svg>
      <svg class="bat" viewBox="0 0 22 18">{@html '<path d="M9 5h7q2 0 2 2v7q0 2-2 2H6M19 9h2v3h-2" fill="none" stroke="#fff" stroke-width="1.500"/><path d="M8 0q3 5 2 9-1 4-5 4l-4 3 1-5Q0 4 8 0z" fill="#fff"/><path d="M3 14L7 6" stroke="#1c1c1c"/>'}</svg>
      <div class="time">4:47 PM<br />9/24/2025</div>
      <svg class="bell" viewBox="0 0 18 20"><path d="M8 2q-6 0-6 6v5l-2 3h15l-2-3V2z" fill="#fff" /><path d="M5 17.500h5q-1 2-2.500 2T5 17.500z" fill="#fff" /><path d="M5 7h4l-4 5h4" fill="none" stroke="#1c1c1c" stroke-width="1.400" /><path d="M12 1h4l-4 5h4" fill="none" stroke="#1c1c1c" stroke-width="3" /><path d="M12 1h4l-4 5h4" fill="none" stroke="#fff" stroke-width="1.300" /></svg>
    </div>
  </footer>
</div>

<style>
  :global(body) { margin: 0; background: #141414; overflow: hidden; }
  .app, .app * { box-sizing: border-box; }
  .app { width: 1920px; height: 1080px; display: flex; flex-direction: column; background: #141414; color: #fff; font-family: 'Open Sans', 'Noto Sans', sans-serif; font-size: 14px; white-space: nowrap; overflow: hidden; }
  p, h2, h3, h4, hr { margin: 0; }
  svg { display: block; flex: none; overflow: visible; }

  .title { height: 44px; flex: none; display: flex; color: #d8d8d8; }
  .i20 { width: 20px; height: 20px; margin: 12px 0 0 21px; }
  .i20.undo { margin-left: 17px; }
  .i20.redo { margin-left: 18px; }
  .doc { margin: 14px 0 0 10px; font-size: 14.2px; line-height: 20px; width: 313px; }
  .tri { width: 12px; height: 8px; margin-top: 18px; }
  .topsearch { width: 500px; height: 30px; margin: 6px 0 0 369px; background: #1f1f1f; border-radius: 3px; display: flex; align-items: center; padding-left: 20px; gap: 14px; font-size: 16px; color: #bdbbb9; }
  .i22 { width: 21px; height: 21px; }
  .signin { margin: 12px 0 0 333px; font-size: 14.3px; line-height: 20px; width: 58px; }
  .avatar { width: 26px; height: 26px; margin-top: 8px; }
  .win { display: flex; gap: 39px; margin: 15px 0 0 39px; }
  .win svg { width: 16px; height: 16px; }

  .menu { height: 44px; flex: none; display: flex; padding-left: 28px; font-size: 16.5px; color: #d8d8d8; }
  .menu span { line-height: 22px; height: 28px; margin-top: 8px; margin-right: 29px; }
  .menu span:first-child { margin-right: 41px; }
  .menu .active { font-weight: 600; color: #fff; border-bottom: 2px solid #2aac94; letter-spacing: -0.25px; }
  .share { margin: 4px 8px 0 auto; width: 105px; height: 30px; border: 0; border-radius: 5px; background: #0f6b5a; color: #c9dcd8; font: 14px 'Open Sans', sans-serif; display: flex; align-items: center; padding: 0 0 0 8px; gap: 10px; }
  .share svg { width: 20px; height: 20px; }
  .share .chev { width: 13px; height: 13px; margin-left: -5px; }

  .ribbon { position: relative; margin: 0 10px; height: 125px; flex: none; background: #292929; border-radius: 10px; display: flex; z-index: 2; }
  .group { flex: none; position: relative; border-right: 1px solid #3d3d3d; margin: 5px 0; display: flex; flex-direction: column; justify-content: space-between; }
  .group p { text-align: center; font-size: 11.7px; font-weight: 500; line-height: 16px; margin-bottom: 3px; letter-spacing: -0.1px; }
  .clip { width: 201px; }
  .clipbody { display: flex; color: #5f5e5c; }
  .paste { width: 52px; margin-left: 9px; padding-top: 5px; display: flex; flex-direction: column; align-items: center; }
  .paste svg { width: 40px; height: 40px; margin-left: 4px; }
  .paste span { line-height: 20px; margin-top: 4px; }
  .clips { padding-left: 3px; }
  .clips div { display: flex; align-items: center; gap: 5px; height: 33px; font-size: 13.9px; }
  .clips div:first-child { height: 30px; }
  .clips svg { width: 20px; height: 20px; }
  .items { display: flex; padding-top: 5px; }
  .item { flex: none; display: flex; flex-direction: column; align-items: center; }
  .item span { line-height: 20px; height: 20px; display: flex; align-items: center; }
  .ri { width: 40px; height: 40px; margin-bottom: 4px; }
  .car { width: 8px; height: 6px; margin: 3px 0 0 3px; }
  .off span { color: #5f5e5c; }
  .collapse { position: absolute; right: 11px; bottom: 13px; width: 12px; height: 8px; }

  main { display: flex; height: 777px; flex: none; }
  .rail { width: 51px; border-right: 1px solid #252525; }
  .rail div { height: 49.8px; padding: 12px 0 0 14px; }
  .rail .on { border-left: 3px solid #2aac94; padding-left: 11px; }
  .rail svg { width: 23px; height: 24px; }
  .center { width: 1417px; display: flex; flex-direction: column; }
  .work { height: 733px; display: flex; background: #fff; color: #252423; }
  .canvas { width: 1376px; padding-left: 43px; background: linear-gradient(#e9e9e9, #fff 6px); }
  .frame { position: relative; width: 1290px; height: 725px; border: 2px dotted #444; border-top: 0; display: flex; flex-direction: column; }
  .matrix { width: 1265px; margin-left: 7px; overflow: hidden; font-size: 12.45px; }
  .row { display: grid; grid-template-columns: 127px 199px 192px 187px 200px 192px 188px; }
  .row span { text-align: right; padding-right: 6px; line-height: 20px; height: 21.08px; border-bottom: 1px solid rgba(232, 232, 232, 0.75); color: #333; }
  .row span:first-child { text-align: left; padding: 0 0 0 5px; border-right: 1px solid #eee; }
  .rows .row:nth-child(even) span:first-child { background: #ececec; }
  .rows { height: 496px; overflow: hidden; border-bottom: 1px solid #74baff; }
  .head { height: 34.500px; border-bottom: 2px solid #74baff; }
  .head span { border: 0 !important; padding-top: 6px; height: 32px; }
  .head i { display: block; width: 0; border: 5px solid transparent; border-top: 0; border-bottom-color: #252423; }
  .total { height: 21px; }
  .total span { font-weight: 700; border: 0 !important; color: #252423; line-height: 21px; letter-spacing: 0.15px; }
  .total span:first-child { letter-spacing: -0.4px; }
  .vbar { position: absolute; left: 1273px; top: 6px; width: 7px; height: 55px; border-radius: 4px; background: #b3b0ad; }
  .hbar { width: 767px; height: 7px; margin: 1px 0 0 7px; border-radius: 4px; background: #b0aeac; flex: none; }
  h3 { font: 400 17px/24px Roboto, sans-serif; text-align: center; margin: 4px 0 0; letter-spacing: 0.02px; }
  .inputs { display: flex; gap: 5px; margin: 6px 0 0 12px; }
  .inputs span { width: 76px; height: 27px; border: 1.500px solid #605e5c; padding-left: 7px; line-height: 24px; font-size: 11.3px; }
  .slider { display: flex; align-items: center; margin: 6px 9px 0 16px; }
  .slider b { width: 26px; height: 26px; border-radius: 50%; border: 2px solid #777; background: #fff; flex: none; }
  .slider hr { flex: 1; height: 3px; border: 0; background: #605e5c; }
  .navs { display: flex; gap: 10px; margin-top: 20px; height: 50px; }
  .navs span { flex: 1; border: 1px solid #444; display: flex; align-items: center; justify-content: center; font-size: 12.3px; padding-top: 1px; }
  .navs .sel { background: #252423; color: #fff; font-weight: 500; }
  .filters { width: 41px; border-left: 1px solid #b3b0ad; display: flex; flex-direction: column; padding-left: 15px; }
  .dbl { width: 12px; height: 12px; }
  .filters .dbl { margin: 17px 0 0 1px; }
  .fi { width: 12px; height: 12px; margin: 24px 0 0 4px; }
  .filters span { writing-mode: vertical-rl; font-weight: 600; font-size: 17.3px; line-height: 24px; margin: 13px 0 0 -2px; width: 24px; }

  .pages { height: 44px; background: #292929; display: flex; }
  .views { width: 160px; border-right: 1px solid #666; display: flex; }
  .desk { width: 30px; margin-left: 13px; padding-top: 7px; }
  .desk svg { width: 22px; height: 22px; margin-left: 4px; }
  .desk i { display: block; height: 4px; border-radius: 2px; background: #2aac94; margin-top: 6px; }
  .phone { width: 14px; height: 24px; margin: 7px 0 0 32px; }
  .arr { width: 8px; height: 12px; margin: 16px 0 0 27px; }
  .arr.a2 { margin-left: 19px; }
  .tab { position: relative; border-right: 1px solid #444; text-align: center; line-height: 44px; padding-top: 1px; font-size: 14.1px; }
  .tab.cur { font-weight: 600; border-bottom: 5px solid #2aac94; letter-spacing: -0.3px; }
  .tab em { position: absolute; right: 4px; top: 2px; font-style: normal; font-weight: 700; line-height: 18px; font-size: 13px; }
  .add { width: 49px; background: #2aac94; padding: 13px 0 0 17px; }
  .add svg { width: 14px; height: 14px; }

  .viz { width: 227px; border-left: 1px solid #555; border-right: 1px solid #666; }
  h2 { display: flex; justify-content: space-between; font-size: 18.2px; font-weight: 600; line-height: 26px; padding: 11px 12px 0 10px; }
  h2 .dbl { margin-top: 7px; }
  h4 { font-size: 13.8px; font-weight: 600; line-height: 20px; padding: 10px 0 0 10px; }
  .modes { display: flex; padding-left: 10px; margin-top: 5px; }
  .mode { width: 40px; height: 40px; background: #292929; border-radius: 3px; padding: 5px; }
  .mode svg, .brush { width: 30px; height: 30px; }
  .brush { margin: 5px 0 0 48px; }
  .notch { width: 226px; height: 12px; margin-top: 4px; }
  .gallery { display: grid; grid-template-columns: repeat(6, 35px); grid-auto-rows: 35px; padding: 10px 0 0 13px; height: 292px; border-bottom: 1px solid #e0e0e0; }
  .gallery svg { width: 26.6px; height: 26.6px; }
  .wells { padding: 0 5px; }
  .wells p { padding: 10px 0 0 10px; line-height: 22px; font-size: 14px; }
  .wells .well { border: 1px dashed #777; height: 35px; line-height: 32px; padding-left: 12px; font-size: 14.2px; margin-top: 7px; }
  .wells .b { font-weight: 600; padding-top: 12px; }
  .wells .sw { display: flex; padding-top: 10px; }
  .wells .two { padding-top: 11px; }
  .toggle { margin: 1px 20px 0 auto; width: 40px; height: 20px; border: 1px solid #b3b0ad; border-radius: 10px; font-size: 11px; line-height: 18px; display: flex; align-items: center; padding-left: 5px; gap: 3px; color: #b3b0ad; }
  .toggle i { width: 10px; height: 10px; border-radius: 50%; background: #b3b0ad; }
  .toggle.ont { background: #2aac94; border-color: #2aac94; color: #1b3b35; }
  .toggle.ont i { background: #252423; }
  .wells .dark { background: #000; height: 32px; line-height: 31px; padding-left: 10px; margin-top: 11px; letter-spacing: -0.02em; }

  .data { flex: 1; }
  .dsearch { margin: 20px 5px 11px; height: 30px; border: 1px solid #666; border-bottom-color: #aaa; border-radius: 4px; background: #1f1f1f; display: flex; align-items: center; gap: 9px; padding-left: 14px; font-size: 16px; color: #a6a4a2; }
  .dsearch svg { width: 19px; height: 19px; }
  .field { height: 30px; display: flex; align-items: center; font-size: 14.4px; letter-spacing: -0.06px; }
  .fc { width: 8px; height: 12px; margin: 0 15px 0 20px; }
  .ft { width: 18px; height: 18px; margin-right: 6px; }

  .status { height: 30px; flex: none; border-top: 1px solid #666; border-bottom: 1px solid #000; display: flex; justify-content: space-between; align-items: center; padding-left: 5px; color: #d2d0ce; font-size: 14.4px; }
  .zoom { display: flex; align-items: center; width: 265px; }
  .zoom b { width: 12px; font-weight: 600; font-size: 17px; line-height: 20px; }
  .track { position: relative; width: 125px; height: 1px; background: #ccc; }
  .track i { position: absolute; left: 46px; top: -6px; width: 5px; height: 13px; background: #d2d0ce; }
  .track u { position: absolute; left: 62px; top: -3px; width: 1px; height: 7px; background: #ccc; }
  .zoom .plus { margin: 0 21px 0 6px; }
  .zoom svg { width: 20px; height: 14px; margin-left: 25px; }

  .taskbar { height: 60px; flex: none; background: #1c1c1c; border-top: 1px solid #3a3a3a; display: flex; }
  .start { width: 29px; height: 29px; margin: 15px 0 0 613px; }
  .pill { width: 275px; height: 40px; margin: 9px 0 0 17px; border-radius: 20px; background: #3b3b3b; border-top: 1px solid #5a5a5a; display: flex; align-items: center; padding-left: 14px; font-size: 16px; color: #cfcfcf; }
  .mag { width: 20px; height: 20px; margin-right: 12px; }
  .lotus { width: 58px; height: 32px; margin-left: 112px; }
  .apps { display: flex; gap: 25px; margin: 14px 0 0 15px; }
  .apps svg { height: 30px; }
  .pbi { width: 50px; height: 50px; margin: 4px 0 0 15px; border-radius: 5px; background: #282828; border: 1px solid #303030; display: flex; flex-direction: column; align-items: center; }
  .pbi svg { width: 24px; height: 30px; margin-top: 9px; }
  .pbi i { width: 20px; height: 4px; border-radius: 2px; background: #4cc2ff; margin-top: 5px; }
  .tray { margin-left: auto; display: flex; padding-right: 26px; line-height: 20px; font-size: 14.5px; }
  .up { width: 16px; height: 10px; margin-top: 24px; }
  .cloud { width: 22px; height: 18px; margin: 21px 0 0 21px; }
  .lang { text-align: center; margin: 9px 0 0 21px; }
  .wifi { width: 20px; height: 16px; margin: 21px 0 0 23px; }
  .vol { width: 20px; height: 18px; margin: 20px 0 0 10px; }
  .bat { width: 21px; height: 18px; margin: 20px 0 0 10px; }
  .time { text-align: right; margin: 8px 0 0 20px; }
  .bell { width: 17px; height: 20px; margin: 20px 0 0 11px; }
</style>
